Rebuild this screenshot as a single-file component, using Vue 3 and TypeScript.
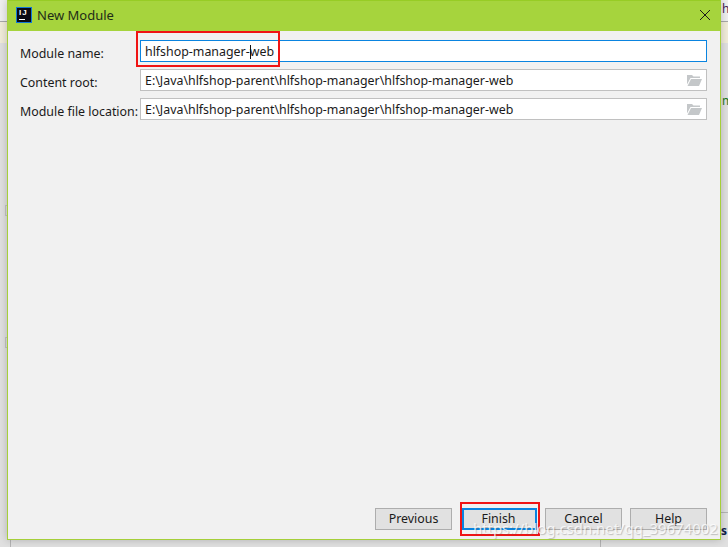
<template>
  <div class="screen">
    <div class="backdrop">
      <div class="back-top"></div>
      <div class="back-cream"></div>
      <span class="back-tab tab-a"></span>
      <span class="back-tab tab-b"></span>
      <span class="back-h">h</span>
      <span class="back-m">m</span>
      <span class="back-s">s</span>
      <span class="back-line line-a"></span>
      <span class="back-line line-b"></span>
      <span class="back-rule"></span>
    </div>

    <div class="dialog">
      <header class="titlebar">
        <span class="logo"><span class="logo-text">IJ</span><span class="logo-bar"></span></span>
        <span class="title">New Module</span>
        <svg class="close" width="12" height="12" viewBox="0 0 12 12">
          <path d="M1 1 L11 11 M11 1 L1 11" stroke="#1a1a1a" stroke-width="1" fill="none" />
        </svg>
      </header>

      <div class="form">
        <template v-for="row in rows" :key="row.label">
          <label class="label">{{ row.label }}</label>
          <div class="field" :class="{ focused: row.focused }">
            <span class="value">{{ row.value }}</span>
            <span v-if="row.focused" class="caret"></span>
            <svg v-else class="folder" width="15" height="11" viewBox="0 0 15 11">
              <path d="M0 0 H5 L6.5 1.5 H13 V3 H3.5 L0 9.5 Z" fill="#c4c7c9" />
              <path d="M4 4 H15 L12 11 H0.5 Z" fill="#c4c7c9" />
            </svg>
          </div>
        </template>
      </div>

      <footer class="buttons">
        <button class="btn">Previous</button>
        <button class="btn primary">Finish</button>
        <button class="btn">Cancel</button>
        <button class="btn">Help</button>
      </footer>
    </div>

    <div class="mark mark-name"></div>
    <div class="mark mark-finish"></div>
    <div class="watermark">https://blog.csdn.net/qq_39674002</div>
  </div>
</template>

<script setup lang="ts">
interface Row {
  label: string
  value: string
  focused?: boolean
}

const projectPath = 'E:\\Java\\hlfshop-parent\\hlfshop-manager\\hlfshop-manager-web'

const rows: Row[] = [
  { label: 'Module name:', value: 'hlfshop-manager-web', focused: true },
  { label: 'Content root:', value: projectPath },
  { label: 'Module file location:', value: projectPath },
]
</script>

<style>
html,
body {
  margin: 0;
  overflow: hidden;
}
</style>

<style scoped>
.screen {
  position: relative;
  width: 728px;
  height: 547px;
  overflow: hidden;
  background: #e0e0e0;
  font-family: "Noto Sans", "Open Sans", sans-serif;
  color: #1a1a1a;
}

.backdrop {
  position: absolute;
  inset: 0;
}

.back-top {
  position: absolute;
  top: 0;
  left: 0;
  right: 0;
  height: 21px;
  background: #efefef;
  border-bottom: 1px solid #a8a8a8;
}

.back-cream {
  position: absolute;
  top: 22px;
  left: 0;
  right: 0;
  height: 21px;
  background: #f1ecd9;
}

.back-tab {
  position: absolute;
  left: 5px;
  width: 3px;
  height: 11px;
  border: 1px solid #c4c4c4;
  box-sizing: border-box;
}

.tab-a {
  top: 205px;
}

.tab-b {
  top: 337px;
}

.back-h,
.back-m,
.back-s {
  position: absolute;
  font-size: 12px;
  line-height: 14px;
}

.back-h {
  left: 722px;
  top: 2px;
  color: #442255;
}

.back-m {
  left: 722px;
  top: 94px;
  color: #1f7a1f;
}

.back-s {
  left: 721px;
  top: 524px;
  font-weight: 700;
  color: #10204a;
}

.back-line {
  position: absolute;
  top: 540px;
  width: 1px;
  height: 7px;
  background: #b4b4b4;
}

.line-a {
  left: 10px;
}

.line-b {
  left: 600px;
}

.back-rule {
  position: absolute;
  left: 721px;
  right: 0;
  top: 512px;
  height: 1px;
  background: #b4b4b4;
}

.dialog {
  position: absolute;
  left: 7px;
  top: 0;
  width: 714px;
  height: 540px;
  box-sizing: border-box;
  display: flex;
  flex-direction: column;
  background: #f1f1f1;
  border: 1px solid #a5cf3a;
  border-width: 0 1px 1px;
  box-shadow: 0 0 8px rgba(0, 0, 0, 0.22);
}

.titlebar {
  height: 31px;
  flex: none;
  display: flex;
  align-items: center;
  padding: 0 9px 2px 8px;
  background: #a6d43d;
  border-top: 1px solid #97cc25;
  box-sizing: border-box;
}

.logo {
  position: relative;
  width: 16px;
  height: 16px;
  background: #0a0a14;
  border: 1px solid #1277d8;
  box-sizing: border-box;
  margin-right: 5px;
}

.logo-text {
  position: absolute;
  left: 2px;
  top: 1px;
  font-family: "Liberation Sans", sans-serif;
  font-size: 8px;
  line-height: 8px;
  font-weight: 700;
  letter-spacing: 1px;
  color: #fff;
}

.logo-bar {
  position: absolute;
  left: 2px;
  bottom: 2px;
  width: 6px;
  height: 1px;
  background: #fff;
}

.title {
  flex: 1;
  font-size: 13px;
  color: #1f2d18;
}

.form {
  display: grid;
  grid-template-columns: 120px 567px;
  grid-auto-rows: 22px;
  row-gap: 7px;
  padding: 9px 0 0 12px;
  align-items: center;
}

.label {
  font-size: 12.4px;
  white-space: nowrap;
  padding-top: 5px;
}

.field {
  height: 22px;
  box-sizing: border-box;
  display: flex;
  align-items: center;
  justify-content: space-between;
  padding: 0 4px;
  background: #fff;
  border: 1px solid #c0c0c0;
}

.field.focused {
  position: relative;
  justify-content: flex-start;
  border-color: #0a84e0;
}

.value {
  font-size: 12.4px;
  white-space: nowrap;
}

.caret {
  position: absolute;
  left: 109px;
  top: 4px;
  width: 1px;
  height: 14px;
  background: #111;
}

.buttons {
  margin-top: auto;
  display: flex;
  justify-content: flex-end;
  gap: 8px;
  padding: 0 13px 9px 0;
}

.btn {
  width: 77px;
  height: 22px;
  padding: 0 0 2px;
  background: #e1e1e1;
  border: 1px solid #adadad;
  font: inherit;
  font-size: 12.4px;
  color: #1a1a1a;
}

.btn.primary {
  width: 75px;
  margin-left: 2px;
  padding-right: 2px;
  border: 2px solid #0a84e0;
}

.mark {
  position: absolute;
  border: 2px solid #f01414;
  box-sizing: border-box;
}

.mark-name {
  left: 136px;
  top: 31px;
  width: 144px;
  height: 36px;
}

.mark-finish {
  left: 460px;
  top: 502px;
  width: 80px;
  height: 34px;
}

.watermark {
  position: absolute;
  left: 473px;
  top: 517px;
  font-size: 14.9px;
  line-height: 22px;
  color: rgba(255, 255, 255, 0.78);
  text-shadow: 1px 1px 1px rgba(90, 90, 90, 0.35);
  white-space: nowrap;
}
</style>
